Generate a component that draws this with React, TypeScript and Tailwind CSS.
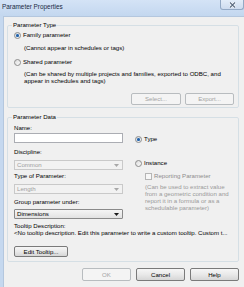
function Radio({ checked }: { checked?: boolean }) {
  return (
    <span className="w-[7px] h-[7px] rounded-full border border-[#8c8c8c] bg-gradient-to-br from-[#dcdcdc] to-[#fbfbfb] flex items-center justify-center shrink-0">
      {checked && <span className="w-[3px] h-[3px] rounded-full bg-[#2160a8] shadow-[0_0_1px_#7fb2e8]" />}
    </span>
  );
}

function Arrow({ dim }: { dim?: boolean }) {
  return (
    <svg width="5" height="3" viewBox="0 0 5 3">
      <polygon points="0,0 5,0 2.5,3" fill={dim ? "#a8a8a8" : "#1a1a1a"} />
    </svg>
  );
}

function Btn({ label, disabled, w }: { label: string; disabled?: boolean; w: string }) {
  return (
    <div
      className={
        disabled
          ? `${w} h-full rounded-[2px] border border-[#b8bcbf] bg-[#f4f4f4] text-[#a3a3a3] flex items-center justify-center`
          : `${w} h-full rounded-[2px] border border-[#7a7a7a] bg-gradient-to-b from-[#f6f6f6] via-[#e9e9e9] to-[#d6d6d6] text-black flex items-center justify-center`
      }
    >
      {label}
    </div>
  );
}

export default function App() {
  return (
    <div className="w-[244px] h-[287px] overflow-hidden bg-[#c5d8ef] flex flex-col text-[6.1px] text-black font-['Liberation_Sans',Arial,sans-serif]">
      {/* title bar */}
      <div className="h-[16px] shrink-0 flex justify-between bg-gradient-to-b from-[#d4e3f6] to-[#c3d7ef]">
        <div className="pl-[2px] pt-[3px] text-[6.4px] leading-[7px] text-[#1b2b42]">Parameter Properties</div>
        <div className="w-[24px] h-[10px] border border-t-0 border-[#93a9c5] rounded-b-[3px] bg-gradient-to-b from-[#e3edf9] to-[#cedcef] flex items-center justify-center">
          <svg width="7" height="6" viewBox="0 0 7 6">
            <path d="M1 0.5 L6 5.5 M6 0.5 L1 5.5" stroke="#ffffff" strokeWidth="2.4" />
            <path d="M1 0.5 L6 5.5 M6 0.5 L1 5.5" stroke="#5a6b80" strokeWidth="1.1" />
          </svg>
        </div>
      </div>

      {/* dialog body */}
      <div className="flex-1 ml-[3px] bg-[#f0f0f0] border-l border-t border-[#b4c7de] pl-[3px] pr-[5px]">
        {/* Parameter Type */}
        <fieldset className="mt-[4px] border border-[#d5dfe5] rounded-[2px] pl-[6px] pr-[4px] pb-[2px]">
          <legend className="-ml-[2px] px-[1px] leading-[8px]">Parameter Type</legend>
          <div className="h-[12px] flex items-center gap-[2px]">
            <Radio checked />
            <span>Family parameter</span>
          </div>
          <div className="mt-[1px] h-[12px] pl-[10px] flex items-center">(Cannot appear in schedules or tags)</div>
          <div className="mt-[2px] h-[12px] flex items-center gap-[2px]">
            <Radio />
            <span>Shared parameter</span>
          </div>
          <div className="mt-[2px] pl-[10px] leading-[7px]">
            <div>(Can be shared by multiple projects and families, exported to ODBC, and</div>
            <div>appear in schedules and tags)</div>
          </div>
          <div className="mt-[9px] h-[12px] flex justify-end gap-[4px]">
            <Btn label="Select..." disabled w="w-[50px]" />
            <Btn label="Export..." disabled w="w-[49px]" />
          </div>
        </fieldset>

        {/* Parameter Data */}
        <fieldset className="mt-[5px] border border-[#d5dfe5] rounded-[2px] pl-[6px] pr-[4px] pb-[4px]">
          <legend className="-ml-[2px] px-[1px] leading-[8px]">Parameter Data</legend>
          <div className="flex">
            <div className="w-[109px] flex flex-col">
              <div className="mt-[3px] leading-[8px]">Name:</div>
              <div className="mt-[1px] h-[10px] border border-[#abadb3] bg-white" />
              <div className="mt-[5px] leading-[8px]">Discipline:</div>
              <div className="mt-[4px] h-[10px] border border-[#c9c9c9] bg-[#f2f2f2] text-[#a0a0a0] flex items-center justify-between pl-[2px] pr-[3px]">
                <span>Common</span>
                <Arrow dim />
              </div>
              <div className="mt-[2px] leading-[8px]">Type of Parameter:</div>
              <div className="mt-[4px] h-[10px] border border-[#c9c9c9] bg-[#f2f2f2] text-[#a0a0a0] flex items-center justify-between pl-[2px] pr-[3px]">
                <span>Length</span>
                <Arrow dim />
              </div>
              <div className="mt-[4px] leading-[8px]">Group parameter under:</div>
              <div className="mt-[3px] h-[10px] border border-[#8a8a8a] rounded-[1px] bg-gradient-to-b from-[#f5f5f5] to-[#e2e2e2] flex items-center justify-between pl-[2px] pr-[3px]">
                <span>Dimensions</span>
                <Arrow />
              </div>
            </div>
            <div className="ml-[12px] flex flex-col">
              <div className="mt-[14px] h-[8px] flex items-center gap-[2px]">
                <Radio checked />
                <span>Type</span>
              </div>
              <div className="mt-[16px] h-[8px] flex items-center gap-[2px]">
                <Radio />
                <span>Instance</span>
              </div>
              <div className="mt-[5px] h-[8px] pl-[10px] flex items-center gap-[2px] text-[#8d8d8d]">
                <span className="w-[7px] h-[7px] border border-[#b5b5b5] bg-[#f7f7f7] shrink-0" />
                <span>Reporting Parameter</span>
              </div>
              <div className="mt-[3px] pl-[10px] leading-[7px] text-[#9a9a9a]">
                <div>(Can be used to extract value</div>
                <div>from a geometric condition and</div>
                <div>report it in a formula or as a</div>
                <div>schedulable parameter)</div>
              </div>
            </div>
          </div>
          <div className="mt-[3px] leading-[7px]">Tooltip Description:</div>
          <div className="leading-[7px] whitespace-nowrap">
            &lt;No tooltip description. Edit this parameter to write a custom tooltip. Custom t...
          </div>
          <div className="mt-[10px] h-[11px] flex">
            <Btn label="Edit Tooltip..." w="w-[54px]" />
          </div>
        </fieldset>

        {/* dialog buttons */}
        <div className="mt-[6px] h-[13px] flex justify-end gap-[5px]">
          <Btn label="OK" disabled w="w-[49px]" />
          <Btn label="Cancel" w="w-[49px]" />
          <Btn label="Help" w="w-[49px]" />
        </div>
      </div>
    </div>
  );
}
